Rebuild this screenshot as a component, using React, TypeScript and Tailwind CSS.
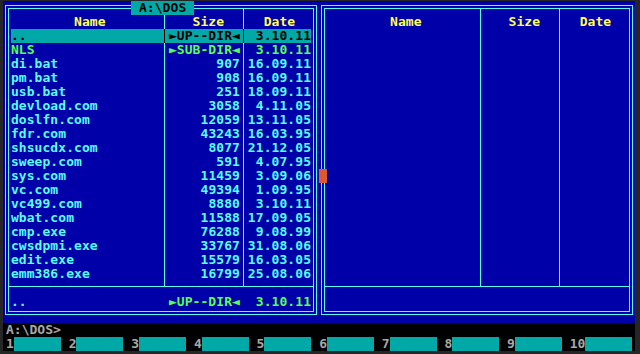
type Entry = { name: string; size: string; date: string; kind?: "up" | "dir" };

const files: Entry[] = [
  { name: "..", size: "►UP--DIR◄", date: "3.10.11", kind: "up" },
  { name: "NLS", size: "►SUB-DIR◄", date: "3.10.11", kind: "dir" },
  { name: "di.bat", size: "907", date: "16.09.11" },
  { name: "pm.bat", size: "908", date: "16.09.11" },
  { name: "usb.bat", size: "251", date: "18.09.11" },
  { name: "devload.com", size: "3058", date: "4.11.05" },
  { name: "doslfn.com", size: "12059", date: "13.11.05" },
  { name: "fdr.com", size: "43243", date: "16.03.95" },
  { name: "shsucdx.com", size: "8077", date: "21.12.05" },
  { name: "sweep.com", size: "591", date: "4.07.95" },
  { name: "sys.com", size: "11459", date: "3.09.06" },
  { name: "vc.com", size: "49394", date: "1.09.95" },
  { name: "vc499.com", size: "8880", date: "3.10.11" },
  { name: "wbat.com", size: "11588", date: "17.09.05" },
  { name: "cmp.exe", size: "76288", date: "9.08.99" },
  { name: "cwsdpmi.exe", size: "33767", date: "31.08.06" },
  { name: "edit.exe", size: "15579", date: "16.03.05" },
  { name: "emm386.exe", size: "16799", date: "25.08.06" },
];

// one column line, centred in a character cell
function Sep({ dark }: { dark?: boolean }) {
  return (
    <div className="flex w-[7.9px] justify-center">
      <div className={dark ? "w-px bg-black" : "w-px bg-[#55ffff]"} />
    </div>
  );
}

function Stub({ tall }: { tall?: boolean }) {
  return (
    <div className={tall ? "flex h-[6px]" : "flex h-[5px]"}>
      <div className="w-[150.1px]" />
      <Sep />
      <div className="w-[71.1px]" />
      <Sep />
      <div className="w-[63.2px]" />
    </div>
  );
}

function Header() {
  return (
    <div className="flex h-[14px] text-[#ffff55]">
      <div className="w-[150.1px] pl-[63.2px]">Name</div>
      <Sep />
      <div className="w-[71.1px] pl-[23.7px]">Size</div>
      <Sep />
      <div className="w-[63.2px] pl-[15.8px]">Date</div>
    </div>
  );
}

function FileRow({ entry }: { entry?: Entry }) {
  const cursor = entry?.kind === "up";
  let tone = "text-[#55ffff]";
  if (cursor) tone = "bg-[#00a8a8] text-black";
  else if (entry?.kind === "dir") tone = "text-[#55ff55]";

  return (
    <div className={`flex h-[14px] ${tone}`}>
      <div className="w-[150.1px] whitespace-pre">{entry?.name}</div>
      <Sep dark={cursor} />
      <div className="w-[71.1px] whitespace-pre text-right">{entry?.size}</div>
      <Sep dark={cursor} />
      <div className="w-[63.2px] whitespace-pre text-right">{entry?.date}</div>
    </div>
  );
}

function Panel({ title, entries }: { title?: string; entries?: Entry[] }) {
  const rows = Array.from({ length: 18 }, (_, i) => entries?.[i]);

  return (
    <div className="relative h-[322px] w-[316px] px-[2px] pt-[4px] pb-[8px]">
      <div className="border border-[#55ffff] p-[2px]">
        <div className="flex flex-col border border-[#55ffff] px-[1.9px] pb-[2px]">
          <Stub tall />
          <Header />
          {rows.map((entry, i) => (
            <FileRow key={i} entry={entry} />
          ))}
          <Stub />
          <div className="-mx-[1.9px] h-px bg-[#55ffff]" />
          <div className="h-[8px]" />
          <div className="flex h-[14px]">
            <div className="w-[150.1px] text-[#55ffff]">{entries ? ".." : ""}</div>
            <div className="w-[7.9px]" />
            <div className="w-[71.1px] text-[#55ff55]">{entries ? "►UP--DIR◄" : ""}</div>
            <div className="w-[7.9px]" />
            <div className="w-[63.2px] text-right text-[#55ff55]">{entries ? "3.10.11" : ""}</div>
          </div>
        </div>
      </div>
      {title && (
        <div className="absolute left-[128px] top-0 h-[14px] w-[63.2px] bg-[#00a8a8] whitespace-pre text-black">
          {title}
        </div>
      )}
    </div>
  );
}

export default function App() {
  const keys = [1, 2, 3, 4, 5, 6, 7, 8, 9];

  return (
    <div className="h-[354px] w-[640px] overflow-hidden bg-[#262626] pl-[3px] pt-[1px] font-['DejaVu_Sans_Mono',monospace] text-[13px] leading-[14px] font-bold tracking-[0.07px]">
      <div className="relative w-[632px]">
        <div className="flex bg-[#0000a8]">
          <Panel title=" A:\DOS " entries={files} />
          <Panel />
        </div>

        {/* mouse cursor */}
        <div className="absolute left-[316px] top-[168px] h-[14px] w-[7.9px] bg-[#e0582f]" />

        <div className="h-[28px] bg-black pl-[3px] tracking-normal text-[#a8a8a8]">
          <div className="h-[14px]">A:\DOS&gt;</div>
          <div className="flex h-[14px]">
            {keys.map((n) => (
              <div key={n} className="flex w-[62.64px]">
                <span className="w-[7.83px]">{n}</span>
                <span className="w-[46.98px] bg-[#00a8a8]" />
              </div>
            ))}
            <div className="flex">
              <span className="w-[15.66px]">10</span>
              <span className="w-[46.98px] bg-[#00a8a8]" />
            </div>
          </div>
        </div>
      </div>
    </div>
  );
}
